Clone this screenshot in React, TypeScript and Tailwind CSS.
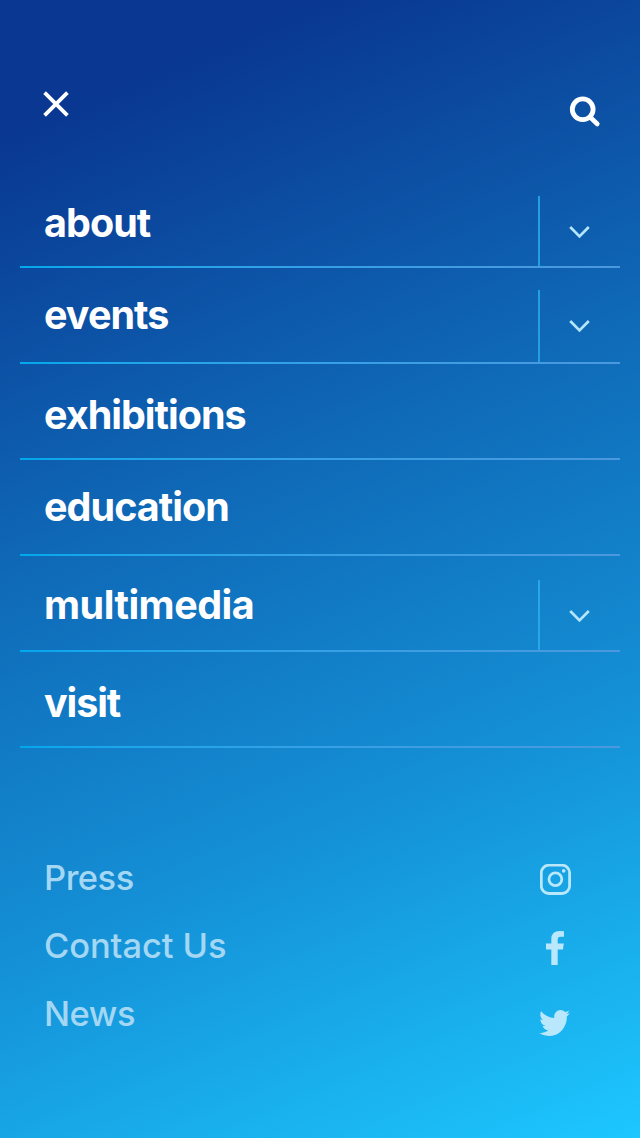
interface NavItem {
  label: string;
  textClass: string;
  toggleClass?: string;
}

const navItems: NavItem[] = [
  { label: "about", textClass: "pt-[31px] tracking-[-0.95px]", toggleClass: "mt-6 h-[72px] pt-[30px] border-[#249fe4]" },
  { label: "events", textClass: "pt-[27px] tracking-[-0.95px]", toggleClass: "mt-[22px] h-[72px] pt-[30px] border-[#249fe4]" },
  { label: "exhibitions", textClass: "pt-[31px] tracking-[-1px]" },
  { label: "education", textClass: "pt-[27px] tracking-[-0.95px]" },
  { label: "multimedia", textClass: "pt-[29px] tracking-[-0.5px]", toggleClass: "mt-6 h-[70px] pt-[30px] border-[#28a8ea]" },
  { label: "visit", textClass: "pt-[31px] tracking-[-1.1px]" },
];

const links = [
  { label: "Press", textClass: "tracking-[-0.5px]" },
  { label: "Contact Us", textClass: "tracking-[-0.1px]" },
  { label: "News", textClass: "tracking-[-0.5px]" },
];

function CloseIcon() {
  return (
    <svg width="26" height="26" viewBox="0 0 26 26" fill="none" stroke="#fff" strokeWidth="3.8">
      <path d="M1.6 1.6 24.4 24.4M24.4 1.6 1.6 24.4" />
    </svg>
  );
}

function SearchIcon() {
  return (
    <svg width="32" height="32" viewBox="0 0 32 32" fill="none" stroke="#fff">
      <circle cx="13.7" cy="13.3" r="10.4" strokeWidth="4.8" />
      <path d="m21 21 7.3 7" strokeWidth="4.6" strokeLinecap="round" />
    </svg>
  );
}

function ChevronIcon() {
  return (
    <svg width="22" height="13" viewBox="0 0 22 13" fill="none" stroke="#b3e5fc" strokeWidth="2.7">
      <path d="m1.2 1 9.3 9.4L19.8 1" />
    </svg>
  );
}

function InstagramIcon() {
  return (
    <svg width="32" height="32" viewBox="0 0 32 32" fill="none" stroke="currentColor" strokeWidth="2.8">
      <rect x="1.3" y="1.2" width="28.3" height="28.3" rx="7.6" />
      <circle cx="15.4" cy="15.3" r="6.4" />
      <circle cx="23.7" cy="6.9" r="1.8" fill="currentColor" stroke="none" />
    </svg>
  );
}

function FacebookIcon() {
  return (
    <svg width="18" height="34" viewBox="479 0 864 1664" preserveAspectRatio="none" fill="currentColor">
      <path d="M1343 12v264h-157q-86 0-116 36t-30 108v189h293l-39 296h-254v759h-306v-759h-255v-296h255v-218q0-186 104-288.5t277-102.5q147 0 228 12z" />
    </svg>
  );
}

function TwitterIcon() {
  return (
    <svg width="31" height="26" viewBox="108 256 1576 1280" preserveAspectRatio="none" fill="currentColor">
      <path d="M1684 408q-67 98-162 167 1 14 1 42 0 130-38 259.5t-115.5 248.5-184.5 210.5-258 146-323 54.5q-271 0-496-145 35 4 78 4 225 0 401-138-105-2-188-64.5t-114-159.5q33 5 61 5 43 0 85-11-112-23-185.5-111.5t-73.5-205.5v-4q68 38 146 41-66-44-105-115t-39-154q0-88 44-163 121 149 294.5 238.5t371.5 99.5q-8-38-8-74 0-134 94.5-228.5t228.5-94.5q140 0 236 102 109-21 205-78-37 115-142 178 93-10 186-50z" />
    </svg>
  );
}

export default function App() {
  return (
    <div className="flex h-[1138px] w-[640px] flex-col overflow-hidden bg-[linear-gradient(157deg,#093791_0%,#093791_9.5%,#0f69b7_41%,#148fd5_68%,#1dc7ff_100%)] font-['Inter',sans-serif]">
      <header className="flex h-[172px] items-start justify-between pr-[39px] pl-[43px]">
        <button className="mt-[91px]" aria-label="Close menu">
          <CloseIcon />
        </button>
        <button className="mt-[96px]" aria-label="Search">
          <SearchIcon />
        </button>
      </header>

      <nav className="mx-5">
        {navItems.map((item) => (
          <div key={item.label} className="flex h-24 flex-col">
            <div className="flex h-[94px] justify-between">
              <a className={`pl-6 text-[39.5px] leading-10 font-bold text-white ${item.textClass}`}>
                {item.label}
              </a>
              {item.toggleClass && (
                <button
                  aria-label={`Expand ${item.label}`}
                  className={`flex w-[82px] items-start border-l-2 pl-[29px] ${item.toggleClass}`}
                >
                  <ChevronIcon />
                </button>
              )}
            </div>
            <div className="h-0.5 bg-linear-to-r from-[#00a8ed] to-[#4b98de]" />
          </div>
        ))}
      </nav>

      <footer className="flex justify-between pt-[112px] pr-[68px] pl-11">
        <div className="flex flex-col text-[34.5px] leading-9 font-[450] text-[#a3d7f3]">
          {links.map((link) => (
            <a key={link.label} className={`h-[68px] ${link.textClass}`}>
              {link.label}
            </a>
          ))}
        </div>
        <div className="flex w-8 flex-col items-center pt-1 text-[#b9e8fc]">
          <InstagramIcon />
          <div className="pt-[35px] pr-[3px]">
            <FacebookIcon />
          </div>
          <div className="pt-[45px] pr-[3px]">
            <TwitterIcon />
          </div>
        </div>
      </footer>
    </div>
  );
}
